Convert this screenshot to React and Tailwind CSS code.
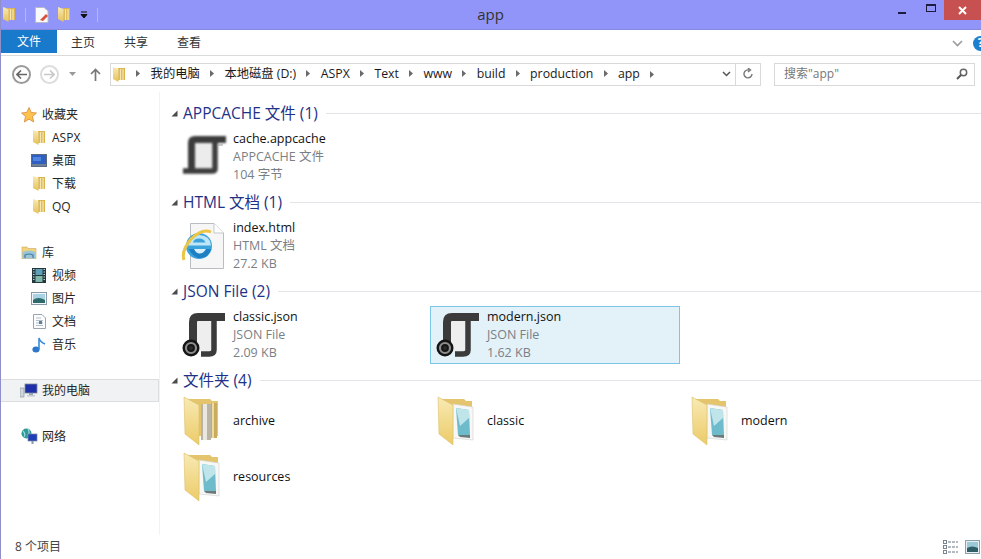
import React from "react";

const F = { fontFamily: '"Open Sans","Noto Sans CJK SC",sans-serif' };

function SmallFolder({ className = "" }) {
  return (
    <svg width="14" height="17" viewBox="0 0 14 17" className={className}>
      <defs>
        <linearGradient id="sf" x1="0" y1="0" x2="0" y2="1">
          <stop offset="0" stopColor="#f8e9b4" />
          <stop offset="1" stopColor="#e6c15a" />
        </linearGradient>
      </defs>
      <path d="M6 2 L13 2 L13 14 L6 14 Z" fill="#dcb44e" />
      <path d="M8.5 3 V14 M11 3 V14" stroke="#f6e6b0" strokeWidth="1.3" />
      <path d="M1 1 L6.5 3 L6.5 16 L1 13 Z" fill="url(#sf)" />
    </svg>
  );
}

function Star() {
  return (
    <svg width="16" height="16" viewBox="0 0 16 16">
      <path d="M8 .5 L10.2 5.4 L15.5 6 L11.5 9.5 L12.7 15 L8 12.2 L3.3 15 L4.5 9.5 L.5 6 L5.8 5.4 Z" fill="#fbc24e" stroke="#d98a3a" strokeWidth=".8" />
    </svg>
  );
}

function Desktop() {
  return (
    <svg width="16" height="13" viewBox="0 0 16 13">
      <rect x=".5" y=".5" width="15" height="12" fill="#2f5fc0" stroke="#5b6b80" />
      <rect x="1" y="10" width="14" height="2" fill="#6f7f95" />
      <path d="M2 3 H10 V7 H2Z" fill="#4f86e0" />
    </svg>
  );
}

function Library() {
  return (
    <svg width="16" height="15" viewBox="0 0 16 15">
      <path d="M1 2 H6 L7 3.5 H15 V13.5 H1 Z" fill="#f3d27c" stroke="#c9a95a" strokeWidth=".6" />
      <path d="M1.5 7 Q8 4 14.5 7 V13.5 H1.5 Z" fill="#9cc4d8" />
      <path d="M4 13 V10 Q8 8 12 10 V13" fill="none" stroke="#3f7f9f" strokeWidth="1.2" />
    </svg>
  );
}

function Film() {
  return (
    <svg width="14" height="15" viewBox="0 0 14 15">
      <rect width="14" height="15" fill="#25383f" />
      <rect x="3.5" y="1" width="7" height="6" fill="#5fa0b8" />
      <rect x="3.5" y="8" width="7" height="6" fill="#7fb8a8" />
      <path d="M1 1.5 H2.5 M1 4 H2.5 M1 6.5 H2.5 M1 9 H2.5 M1 11.5 H2.5 M11.5 1.5 H13 M11.5 4 H13 M11.5 6.5 H13 M11.5 9 H13 M11.5 11.5 H13" stroke="#b8d0d8" strokeWidth="1" />
    </svg>
  );
}

function Picture() {
  return (
    <svg width="16" height="13" viewBox="0 0 16 13">
      <rect x=".5" y=".5" width="15" height="12" fill="#f4f7f9" stroke="#8a9aa8" />
      <rect x="2" y="2" width="12" height="9" fill="#a9d2e4" />
      <path d="M2 8 Q7 4 14 8 V11 H2 Z" fill="#2d6a6a" />
    </svg>
  );
}

function Doc() {
  return (
    <svg width="13" height="15" viewBox="0 0 13 15">
      <path d="M.5 .5 H9 L12.5 4 V14.5 H.5 Z" fill="#fbfcfd" stroke="#9aa5b0" />
      <path d="M3 4 H8 M3 6.5 H10 M3 9 H10 M3 11.5 H10" stroke="#b4bfca" />
      <rect x="6" y="7" width="3" height="3" fill="#5a7f9f" />
    </svg>
  );
}

function Music() {
  return (
    <svg width="14" height="16" viewBox="0 0 14 16">
      <ellipse cx="4" cy="12.5" rx="3.6" ry="3" fill="#2c77c9" />
      <path d="M7 12 V1 Q8 5 13 7" fill="none" stroke="#3a8bdc" strokeWidth="1.6" />
    </svg>
  );
}

function Computer() {
  return (
    <svg width="18" height="15" viewBox="0 0 18 15">
      <rect x="0" y="5" width="4" height="9" fill="#cfd6dc" stroke="#7f8c98" strokeWidth=".6" />
      <rect x="5" y="1" width="12" height="9" fill="#1f2fa8" stroke="#7c8a9a" strokeWidth=".8" />
      <rect x="9" y="10" width="4" height="2" fill="#9aa5b0" />
      <rect x="7" y="12" width="8" height="1.5" fill="#c2c9d0" />
    </svg>
  );
}

function Network() {
  return (
    <svg width="17" height="17" viewBox="0 0 17 17">
      <circle cx="5.5" cy="5.5" r="5" fill="#2f9a8f" />
      <path d="M2 3 Q5 6 3 9 M7 1 Q9 4 7 8" stroke="#9ad8e8" strokeWidth="1.2" fill="none" />
      <rect x="7" y="6" width="9" height="7" fill="#1f3fb8" stroke="#7c8a9a" strokeWidth=".7" />
      <rect x="10.5" y="13" width="2" height="3" fill="#8a98a8" />
    </svg>
  );
}

function ScrollIcon() {
  return (
    <svg width="48" height="48" viewBox="0 0 48 48" className="shrink-0">
      <rect x="12" y="8" width="24" height="28" fill="#ececec" />
      <g style={{ filter: "blur(0.9px)" }} fill="none" stroke="#3c3c3c">
        <path d="M46 6.5 H15 Q11.5 6.5 11.5 10 V36" strokeWidth="7" />
        <path d="M35 8 V36 Q35 38 32 38 H3" strokeWidth="5.5" />
      </g>
      <path d="M38 12 H43" stroke="#999" strokeWidth="1" />
    </svg>
  );
}

function JsonIcon() {
  return (
    <svg width="48" height="48" viewBox="0 0 48 48" className="shrink-0">
      <rect x="14" y="8" width="20" height="32" fill="#eeeeee" />
      <g style={{ filter: "blur(0.5px)" }} fill="none" stroke="#3b3b3b">
        <path d="M45 6 H18 Q13 6 13 11 V32" strokeWidth="8" />
        <path d="M34 8 V39 Q34 43 29 43 H21" strokeWidth="5.5" />
      </g>
      <circle cx="11" cy="37" r="8.5" fill="#141414" />
      <circle cx="11" cy="37" r="5" fill="none" stroke="#8d8d8d" strokeWidth="2.2" />
      <circle cx="11" cy="37" r="2" fill="#2a2a2a" />
    </svg>
  );
}

function IeIcon() {
  return (
    <svg width="48" height="48" viewBox="0 0 48 48" className="shrink-0">
      <path d="M10.5 1.5 H34 L43.5 11 V46.5 H10.5 Z" fill="#f6f6f6" stroke="#b9bdc2" />
      <path d="M34 1.5 V11 H43.5" fill="#fff" stroke="#c4c7cb" />
      <circle cx="19" cy="24" r="13" fill="#3aa3dc" />
      <path d="M8 23.5 H31 Q30 13 19 13 Q10 14 8 23.5 Z M13 20.5 Q14 16.5 19 16.5 Q24 16.5 25.5 20.5 Z" fill="#bfe6f6" fillRule="evenodd" />
      <path d="M9 27 H31 Q28 37 18 36 Q12 34 9 27Z" fill="#1e7fc2" />
      <path d="M14 27 H26 Q23 32 19 31.5 Q16 31 14 27Z" fill="#d8f0fa" />
      <path d="M4 38 Q1 29 11 17 Q22 6 31 10" fill="none" stroke="#edc545" strokeWidth="3" />
    </svg>
  );
}

function BigFolder({ kind }) {
  return (
    <svg width="48" height="50" viewBox="0 0 48 50" className="shrink-0">
      <defs>
        <linearGradient id="bf" x1="0" y1="0" x2="0" y2="1">
          <stop offset="0" stopColor="#f8eab4" />
          <stop offset="1" stopColor="#eccb68" />
        </linearGradient>
      </defs>
      <path d="M6 3 H28 L30 5 H36 V40 H6 Z" fill="#e4c46c" />
      {kind === "archive" ? (
        <>
          <path d="M19 8 H29 V44 H19 Z" fill="#b9b4a4" />
          <path d="M21 8 H25 V44 H21 Z" fill="#ebe8df" />
          <path d="M29 7 H35 V42 H29 Z" fill="#c9ac5e" />
          <path d="M31 7 V42" stroke="#f0dc9a" strokeWidth="2" />
        </>
      ) : (
        <>
          <path d="M15 12 H20 V38 H15 Z" fill="#c8524a" />
          <path d="M17 8 L37 11 V44 L17 42 Z" fill="#f7f7f5" stroke="#cfd2d2" strokeWidth=".6" />
          <path d="M20 12 L33 14 L34 39 L22 39 Z" fill="#6ebccb" />
          <path d="M20 12 L33 14 L33 22 L24 30 Z" fill="#bfe4ea" />
          <path d="M22 39 L34 39 L34 42 L24 41 Z" fill="#6d7a7a" />
        </>
      )}
      <path d="M2 1 L17 9 V49 L3 38 Z" fill="url(#bf)" stroke="#dcc06a" strokeWidth=".6" />
    </svg>
  );
}

function Tri({ className = "" }) {
  return (
    <svg width="7" height="7" viewBox="0 0 7 7" className={"shrink-0 " + className}>
      <path d="M6.5 .5 V6.5 H.5 Z" fill="#4a4a4a" />
    </svg>
  );
}

function Crumb({ text }) {
  return (
    <div className="flex items-center">
      <svg width="4" height="7" viewBox="0 0 4 7" className="mx-[10.3px] shrink-0">
        <path d="M0 0 L4 3.5 L0 7 Z" fill="#6a6a6a" />
      </svg>
      <span className="text-[12.3px] leading-none text-[#1a1a1a] whitespace-nowrap">{text}</span>
    </div>
  );
}

function NavRow({ icon, label, level = 0, selected = false }) {
  return (
    <div className={"flex h-[23px] items-center " + (selected ? "bg-[#f1f2f3] border-y border-[#dcdddf] border-r" : "")}>
      <div className={"flex items-center justify-center shrink-0 " + (level ? "w-[16px] ml-[30px] mr-[5px]" : "w-[18px] ml-[19px] mr-[4px]")}>{icon}</div>
      <span className="text-[12px] leading-none text-[#262626] whitespace-nowrap">{label}</span>
    </div>
  );
}

function Group({ title, children }) {
  return (
    <section>
      <div className="flex h-[33px] items-center pt-[2px]">
        <Tri className="ml-[11px] mr-[5px]" />
        <span className="text-[15.5px] leading-none text-[#1e3287] whitespace-nowrap">{title}</span>
        <div className="ml-[8px] flex-1 h-px bg-[#e2e4e8]" />
      </div>
      <div className="flex flex-wrap pl-[17px]">{children}</div>
    </section>
  );
}

function FileItem({ icon, name, type, size, selected }) {
  return (
    <div className={"flex h-[56px] w-[248px] mr-[6px] items-center pl-[3px] " + (selected ? "bg-[#e3f1f9] outline outline-1 outline-[#7dc5e6]" : "")}>
      {icon}
      <div className="ml-[5px] flex flex-col">
        <span className="h-[18px] text-[12.5px] leading-[18px] text-[#111] whitespace-nowrap">{name}</span>
        <span className="h-[18px] text-[12.5px] leading-[18px] text-[#7a7f85] whitespace-nowrap">{type}</span>
        <span className="h-[18px] text-[12.5px] leading-[18px] text-[#7a7f85] whitespace-nowrap">{size}</span>
      </div>
    </div>
  );
}

function FolderItem({ kind, name }) {
  return (
    <div className="flex h-[56px] w-[248px] mr-[6px] items-center pl-[5px] pb-[6px]">
      <BigFolder kind={kind} />
      <span className="ml-[3px] text-[12.5px] leading-none text-[#111]">{name}</span>
    </div>
  );
}

export default function App() {
  return (
    <div style={F} className="flex h-[559px] w-[981px] flex-col overflow-hidden bg-white border-l border-[#8f90c9]">
      <header className="relative flex h-[30px] shrink-0 items-start bg-[#9194f8] border-b border-[#8688d8]">
        <div className="flex h-[29px] items-center">
          <SmallFolder className="ml-[1px]" />
          <div className="ml-[9px] h-[14px] w-px bg-[#b6b8e6]" />
          <svg width="14" height="16" viewBox="0 0 14 16" className="ml-[9px]">
            <path d="M.5 .5 H9 L13 4 V15.5 H.5 Z" fill="#fafafa" stroke="#b9b9cc" />
            <path d="M5 13 L11 7 L13 9 L8 14 Z" fill="#d9503f" />
          </svg>
          <SmallFolder className="ml-[8px]" />
          <svg width="8" height="8" viewBox="0 0 8 8" className="ml-[9px]">
            <path d="M1 1 H7 M1 3.5 H7 L4 7 Z" stroke="#111" strokeWidth="1" fill="#111" />
          </svg>
          <div className="ml-[9px] h-[14px] w-px bg-[#b6b8e6]" />
        </div>
        <div className="flex-1 flex h-[29px] items-center justify-center pr-[15px] text-[15px] text-[#333]">app</div>
        <div className="flex h-[20px] items-center">
          <div className="h-[2px] w-[8px] mt-[6px] bg-[#1c1c40] mr-[20px]" />
          <div className="h-[8px] w-[10px] -mt-[4px] border border-[#1c1c40] border-t-2 mr-[8px]" />
          <div className="flex h-[20px] w-[37px] items-center justify-center bg-[#c75050] text-white">
            <svg width="9" height="9" viewBox="0 0 9 9"><path d="M1 1 L8 8 M8 1 L1 8" stroke="#fff" strokeWidth="2" /></svg>
          </div>
        </div>
      </header>

      <nav className="flex h-[26px] shrink-0 items-start border-b border-[#dadbdc] bg-white">
        <div className="flex h-[23px] w-[56px] items-center justify-center bg-[#1979ca] text-[12px] text-white">文件</div>
        <div className="flex h-[25px] items-center text-[12px] text-[#333]">
          <span className="ml-[14px]">主页</span>
          <span className="ml-[29px]">共享</span>
          <span className="ml-[29px]">查看</span>
        </div>
        <div className="ml-auto flex h-[26px] items-center overflow-hidden">
          <svg width="11" height="7" viewBox="0 0 11 7"><path d="M1 1 L5.5 5.5 L10 1" fill="none" stroke="#9a9a9a" strokeWidth="1.6" /></svg>
          <div className="ml-[10px] -mr-[7px] flex h-[15px] w-[15px] items-center justify-center rounded-full bg-[#1c7fd0] text-[12px] font-bold text-white">?</div>
        </div>
      </nav>

      <div className="flex h-[36px] shrink-0 items-center">
        <div className="ml-[11px] flex h-[19px] w-[19px] items-center justify-center rounded-full border-2 border-[#9a9a9a]">
          <svg width="11" height="9" viewBox="0 0 11 9"><path d="M5 .5 L1 4.5 L5 8.5 M1 4.5 H11" fill="none" stroke="#666" strokeWidth="1.6" /></svg>
        </div>
        <div className="ml-[9px] flex h-[19px] w-[19px] items-center justify-center rounded-full border-2 border-[#dcdcdc]">
          <svg width="11" height="9" viewBox="0 0 11 9"><path d="M6 .5 L10 4.5 L6 8.5 M0 4.5 H10" fill="none" stroke="#c8c8c8" strokeWidth="1.6" /></svg>
        </div>
        <svg width="7" height="4" viewBox="0 0 7 4" className="ml-[10px]"><path d="M0 0 H7 L3.5 4 Z" fill="#999" /></svg>
        <svg width="11" height="13" viewBox="0 0 11 13" className="ml-[14px]"><path d="M5.5 13 V1.5 M1 6 L5.5 1.5 L10 6" fill="none" stroke="#777" strokeWidth="1.7" /></svg>
        <div className="ml-[9px] flex h-[23px] w-[651px] items-center border border-[#d9d9d9]">
          <SmallFolder className="ml-[1px]" />
          <Crumb text="我的电脑" />
          <Crumb text="本地磁盘 (D:)" />
          <Crumb text="ASPX" />
          <Crumb text="Text" />
          <Crumb text="www" />
          <Crumb text="build" />
          <Crumb text="production" />
          <Crumb text="app" />
          <svg width="4" height="7" viewBox="0 0 4 7" className="ml-[10px] shrink-0"><path d="M0 0 L4 3.5 L0 7 Z" fill="#6a6a6a" /></svg>
          <div className="ml-auto mr-[4px] flex h-full w-[10px] shrink-0 items-center justify-center">
            <svg width="9" height="6" viewBox="0 0 9 6"><path d="M1 1 L4.5 4.5 L8 1" fill="none" stroke="#555" strokeWidth="1.5" /></svg>
          </div>
          <div className="flex h-full w-[25px] shrink-0 items-center justify-center border-l border-[#d9d9d9]">
            <svg width="12" height="12" viewBox="0 0 12 12"><path d="M10 6 A4 4 0 1 1 7 2 M6 0 L8.5 2 L6 4" fill="none" stroke="#777" strokeWidth="1.4" /></svg>
          </div>
        </div>
        <div className="ml-[13px] flex h-[23px] w-[201px] items-center border border-[#d9d9d9] pl-[9px] pr-[6px] text-[12px] text-[#777]">
          <span>搜索"app"</span>
          <svg width="12" height="12" viewBox="0 0 12 12" className="ml-auto"><circle cx="7.5" cy="4.5" r="3.2" fill="none" stroke="#666" strokeWidth="1.5" /><path d="M5 7 L1 11" stroke="#555" strokeWidth="2" /></svg>
        </div>
      </div>

      <main className="flex min-h-0 flex-1">
        <aside className="flex w-[159px] shrink-0 flex-col pt-[11px] border-r border-[#f1f2f4]">
          <NavRow icon={<Star />} label="收藏夹" />
          <NavRow level={1} icon={<SmallFolder />} label="ASPX" />
          <NavRow level={1} icon={<Desktop />} label="桌面" />
          <NavRow level={1} icon={<SmallFolder />} label="下载" />
          <NavRow level={1} icon={<SmallFolder />} label="QQ" />
          <div className="h-[23px]" />
          <NavRow icon={<Library />} label="库" />
          <NavRow level={1} icon={<Film />} label="视频" />
          <NavRow level={1} icon={<Picture />} label="图片" />
          <NavRow level={1} icon={<Doc />} label="文档" />
          <NavRow level={1} icon={<Music />} label="音乐" />
          <div className="h-[23px]" />
          <NavRow selected icon={<Computer />} label="我的电脑" />
          <div className="h-[23px]" />
          <NavRow icon={<Network />} label="网络" />
        </aside>
        <div className="flex-1 min-w-0 pt-[4px]">
          <Group title="APPCACHE 文件 (1)">
            <FileItem icon={<ScrollIcon />} name="cache.appcache" type="APPCACHE 文件" size="104 字节" />
          </Group>
          <Group title="HTML 文档 (1)">
            <FileItem icon={<IeIcon />} name="index.html" type="HTML 文档" size="27.2 KB" />
          </Group>
          <Group title="JSON File (2)">
            <FileItem icon={<JsonIcon />} name="classic.json" type="JSON File" size="2.09 KB" />
            <FileItem selected icon={<JsonIcon />} name="modern.json" type="JSON File" size="1.62 KB" />
          </Group>
          <Group title="文件夹 (4)">
            <FolderItem kind="archive" name="archive" />
            <FolderItem kind="open" name="classic" />
            <FolderItem kind="open" name="modern" />
            <FolderItem kind="open" name="resources" />
          </Group>
        </div>
      </main>

      <footer className="flex h-[24px] shrink-0 items-center pl-[14px] text-[12px] text-[#444]">
        <span>8 个项目</span>
        <div className="ml-auto flex items-center">
          <svg width="15" height="14" viewBox="0 0 15 14">
            <path d="M5 2 H15 M5 7 H15 M5 12 H15" stroke="#6a7580" strokeDasharray="3 1" />
            <rect x=".5" y=".5" width="3" height="3" fill="none" stroke="#7a8590" />
            <rect x=".5" y="5.5" width="3" height="3" fill="none" stroke="#7a8590" />
            <rect x=".5" y="10.5" width="3" height="3" fill="none" stroke="#7a8590" />
          </svg>
          <svg width="15" height="14" viewBox="0 0 15 14" className="ml-[7px] mr-[1px]">
            <rect x=".5" y=".5" width="14" height="13" fill="#e8f0f4" stroke="#8aa0ac" />
            <rect x="2" y="2" width="11" height="10" fill="#9ccbd8" />
            <path d="M2 8 Q7 5 13 8 V12 H2Z" fill="#2e5f66" />
          </svg>
        </div>
      </footer>
    </div>
  );
}
